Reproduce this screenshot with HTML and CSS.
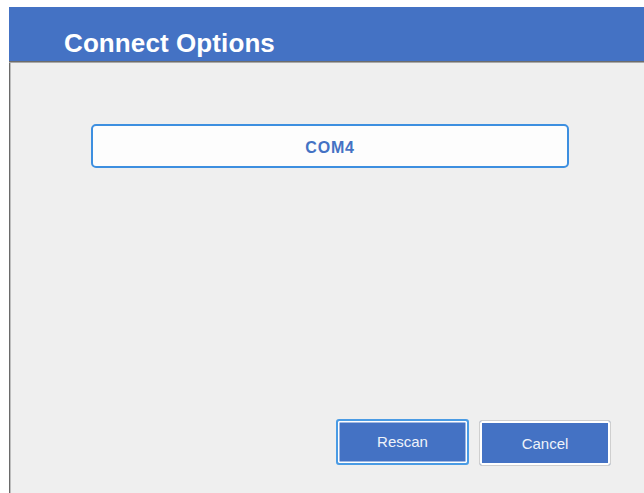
FILE: index.html
```html
<!DOCTYPE html>
<html lang="en">
<head>
<meta charset="utf-8">
<title>Connect Options</title>
<link rel="stylesheet" href="styles.css">
</head>
<body>
  <div class="dialog">
    <header class="dialog-header">
      <h1 class="dialog-title">Connect Options</h1>
    </header>
    <main class="dialog-body">
      <button class="port-option" type="button">COM4</button>
      <div class="actions">
        <button class="btn btn-primary" type="button">Rescan</button>
        <button class="btn btn-secondary" type="button">Cancel</button>
      </div>
    </main>
  </div>
</body>
</html>
```

FILE: styles.css
```css
html, body {
  margin: 0;
  padding: 0;
  background: #ffffff;
  height: 100%;
  overflow: hidden;
}

body {
  font-family: "Liberation Sans", Arial, sans-serif;
}

.dialog {
  margin: 7px 0 0 9px;
  height: 486px;
  display: flex;
  flex-direction: column;
  background: #efefef;
}

.dialog-header {
  background: #4472c4;
  height: 55px;
  box-sizing: border-box;
  padding: 21px 0 0 55px;
  border-bottom: 1px solid #6c6c6c;
  box-shadow: 0 1px 0 #a9a9a9;
  position: relative;
  z-index: 1;
}

.dialog-title {
  margin: 0;
  color: #ffffff;
  font-size: 26px;
  line-height: 30px;
  font-weight: bold;
  letter-spacing: 0.1px;
}

.dialog-body {
  flex: 1;
  display: flex;
  flex-direction: column;
  border-left: 1px solid #6a6a6a;
  box-shadow: inset 1px 0 0 #bdbdbd;
  padding: 62px 0 27px 81px;
}

.port-option {
  width: 478px;
  height: 44px;
  box-sizing: border-box;
  background: #fdfdfd;
  border: 2px solid #3d8fe0;
  border-radius: 5px;
  color: #4472c4;
  font-family: "Liberation Sans", Arial, sans-serif;
  font-weight: bold;
  font-size: 16px;
  letter-spacing: 0.8px;
  padding: 3px 0 0 0;
  cursor: pointer;
}

.actions {
  margin-top: auto;
  display: flex;
  justify-content: flex-end;
  align-items: flex-start;
  gap: 10px;
  padding-right: 33px;
}

.btn {
  height: 46px;
  box-sizing: border-box;
  background: #4472c4;
  color: #eef2fa;
  font-family: "Liberation Sans", Arial, sans-serif;
  font-size: 15px;
  border-radius: 3px;
  padding: 0;
  cursor: pointer;
}

.btn-primary {
  width: 133px;
  border: 2px solid #4a9be4;
  box-shadow: inset 0 0 0 1.5px #ffffff;
  padding-bottom: 1px;
}

.btn-secondary {
  width: 132px;
  margin-top: 1px;
  border: 1px solid #cfcfcf;
  box-shadow: inset 0 0 0 2px #ffffff;
}
```
